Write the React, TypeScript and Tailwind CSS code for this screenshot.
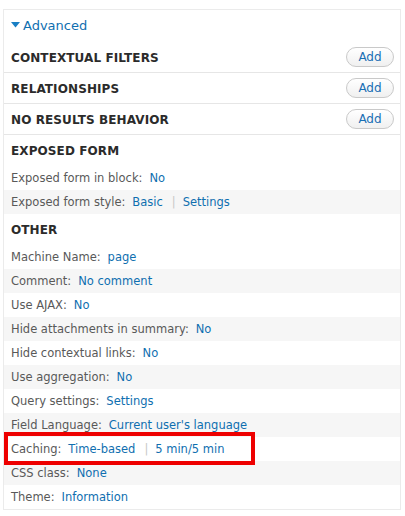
import React from "react";

type Part = { text: string; link?: boolean; sep?: boolean };

interface SettingRow {
  label: string;
  parts: Part[];
  shaded?: boolean;
  highlight?: boolean;
}

const exposedRows: SettingRow[] = [
  { label: "Exposed form in block:", parts: [{ text: "No", link: true }] },
  {
    label: "Exposed form style:",
    parts: [{ text: "Basic", link: true }, { text: "|", sep: true }, { text: "Settings", link: true }],
    shaded: true,
  },
];

const otherRows: SettingRow[] = [
  { label: "Machine Name:", parts: [{ text: "page", link: true }] },
  { label: "Comment:", parts: [{ text: "No comment", link: true }], shaded: true },
  { label: "Use AJAX:", parts: [{ text: "No", link: true }] },
  { label: "Hide attachments in summary:", parts: [{ text: "No", link: true }], shaded: true },
  { label: "Hide contextual links:", parts: [{ text: "No", link: true }] },
  { label: "Use aggregation:", parts: [{ text: "No", link: true }], shaded: true },
  { label: "Query settings:", parts: [{ text: "Settings", link: true }] },
  { label: "Field Language:", parts: [{ text: "Current user's language", link: true }], shaded: true },
  {
    label: "Caching:",
    parts: [{ text: "Time-based", link: true }, { text: "|", sep: true }, { text: "5 min/5 min", link: true }],
    highlight: true,
  },
  { label: "CSS class:", parts: [{ text: "None", link: true }], shaded: true },
  { label: "Theme:", parts: [{ text: "Information", link: true }] },
];

function Row({ row }: { row: SettingRow }) {
  return (
    <div className={`relative flex h-[24px] items-center px-[7px] pt-[2px] ${row.shaded ? "bg-[#f6f6f6]" : "bg-white"}`}>
      <span className="text-[#595959]">{row.label}</span>
      {row.parts.map((p, i) =>
        p.sep ? (
          <span key={i} className="ml-[9px] text-[#c8c8c8]">
            {p.text}
          </span>
        ) : (
          <span key={i} className="ml-[7px] text-[#0f6fb0]">
            {p.text}
          </span>
        )
      )}
      {row.highlight && (
        <div className="pointer-events-none absolute left-[0px] top-[-5px] z-10 h-[33px] w-[251px] border-[4px] border-[#ee0000]" />
      )}
    </div>
  );
}

function AddHeading({ title }: { title: string }) {
  return (
    <div className="flex h-[31px] items-center justify-between border-b border-[#e6e6e6] pl-[7px] pr-[6px] pt-[2px]">
      <span className="text-[12px] font-bold tracking-[0.1px] text-[#2b2b2b]">{title}</span>
      <button className="mt-[-3px] h-[20px] w-[48px] rounded-full border border-[#c9c9c9] bg-gradient-to-b from-white to-[#f0f0f0] text-[12px] leading-none text-[#1a6fb5]">
        Add
      </button>
    </div>
  );
}

function Heading({ title }: { title: string }) {
  return (
    <div className="flex h-[31px] items-center pl-[7px] pt-[1px]">
      <span className="text-[12px] font-bold tracking-[0.1px] text-[#2b2b2b]">{title}</span>
    </div>
  );
}

export default function App() {
  return (
    <div className="h-[516px] w-[405px] bg-white pt-[9px] font-['DejaVu_Sans',sans-serif] text-[11.5px]">
      <div className="ml-[3px] w-[398px] border border-[#ebebeb]">
        <div className="flex h-[32px] items-center pl-[7px] text-[13px] text-[#0f6fb0]">
          <svg width="9" height="6" viewBox="0 0 9 6" className="mr-[3px] mt-[-2px]">
            <path d="M0 0 H9 L4.5 5.5 Z" fill="#1a7fc4" />
          </svg>
          Advanced
        </div>
        <AddHeading title="CONTEXTUAL FILTERS" />
        <AddHeading title="RELATIONSHIPS" />
        <AddHeading title="NO RESULTS BEHAVIOR" />
        <Heading title="EXPOSED FORM" />
        {exposedRows.map((r) => (
          <Row key={r.label} row={r} />
        ))}
        <Heading title="OTHER" />
        {otherRows.map((r) => (
          <Row key={r.label} row={r} />
        ))}
      </div>
    </div>
  );
}
